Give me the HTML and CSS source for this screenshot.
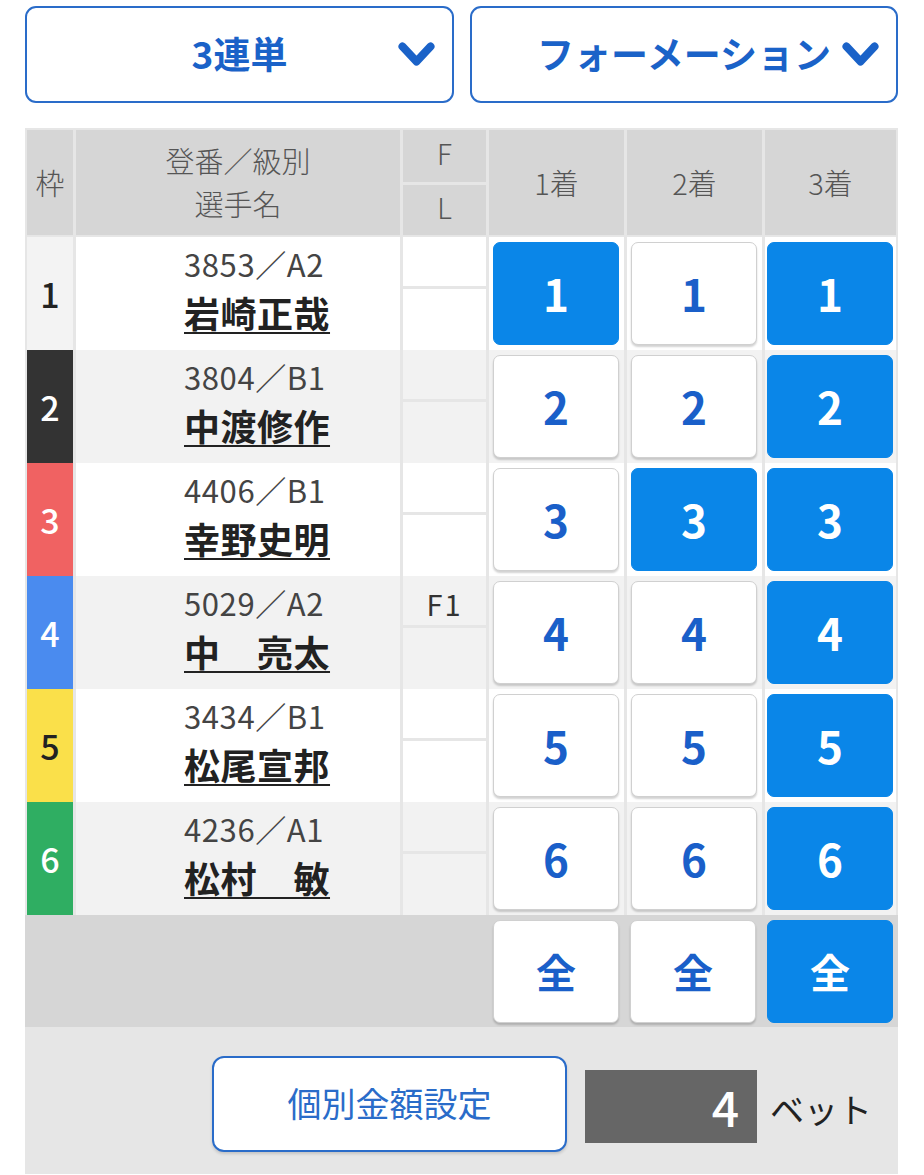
FILE: index.html
```html
<!DOCTYPE html>
<html lang="ja">
<head>
<meta charset="utf-8">
<title>3連単 フォーメーション</title>
<link rel="stylesheet" href="styles.css">
</head>
<body>
<div class="page">
  <div class="selects">
    <div class="select">
      <span class="sel-spacer"></span>
      <span class="sel-text">3連単</span>
      <svg class="chev" viewBox="0 0 37 25" width="37" height="25"><path d="M4.5 4.5 L18.5 19.5 L32.5 4.5" fill="none" stroke="#1a62c8" stroke-width="8" stroke-linecap="round" stroke-linejoin="round"/></svg>
    </div>
    <div class="select">
      <span class="sel-spacer"></span>
      <span class="sel-text">フォーメーション</span>
      <svg class="chev" viewBox="0 0 37 25" width="37" height="25"><path d="M4.5 4.5 L18.5 19.5 L32.5 4.5" fill="none" stroke="#1a62c8" stroke-width="8" stroke-linecap="round" stroke-linejoin="round"/></svg>
    </div>
  </div>

  <div class="board">
    <div class="row head">
      <div class="hc">枠</div>
      <div class="hc two"><span>登番／級別</span><span>選手名</span></div>
      <div class="fl">
        <div class="hc sub">F</div>
        <div class="hc sub">L</div>
      </div>
      <div class="hc">1着</div>
      <div class="hc">2着</div>
      <div class="hc">3着</div>
    </div>

    <div class="row odd">
      <div class="waku w1">1</div>
      <div class="player"><span class="reg">3853／A2</span><span class="pname">岩崎正哉</span></div>
      <div class="fl"><div class="flc"></div><div class="flc"></div></div>
      <div class="bc"><div class="btn on">1</div></div>
      <div class="bc"><div class="btn">1</div></div>
      <div class="bc"><div class="btn on">1</div></div>
    </div>
    <div class="row even">
      <div class="waku w2">2</div>
      <div class="player"><span class="reg">3804／B1</span><span class="pname">中渡修作</span></div>
      <div class="fl"><div class="flc"></div><div class="flc"></div></div>
      <div class="bc"><div class="btn">2</div></div>
      <div class="bc"><div class="btn">2</div></div>
      <div class="bc"><div class="btn on">2</div></div>
    </div>
    <div class="row odd">
      <div class="waku w3">3</div>
      <div class="player"><span class="reg">4406／B1</span><span class="pname">幸野史明</span></div>
      <div class="fl"><div class="flc"></div><div class="flc"></div></div>
      <div class="bc"><div class="btn">3</div></div>
      <div class="bc"><div class="btn on">3</div></div>
      <div class="bc"><div class="btn on">3</div></div>
    </div>
    <div class="row even">
      <div class="waku w4">4</div>
      <div class="player"><span class="reg">5029／A2</span><span class="pname">中　亮太</span></div>
      <div class="fl"><div class="flc">F1</div><div class="flc"></div></div>
      <div class="bc"><div class="btn">4</div></div>
      <div class="bc"><div class="btn">4</div></div>
      <div class="bc"><div class="btn on">4</div></div>
    </div>
    <div class="row odd">
      <div class="waku w5">5</div>
      <div class="player"><span class="reg">3434／B1</span><span class="pname">松尾宣邦</span></div>
      <div class="fl"><div class="flc"></div><div class="flc"></div></div>
      <div class="bc"><div class="btn">5</div></div>
      <div class="bc"><div class="btn">5</div></div>
      <div class="bc"><div class="btn on">5</div></div>
    </div>
    <div class="row even">
      <div class="waku w6">6</div>
      <div class="player"><span class="reg">4236／A1</span><span class="pname">松村　敏</span></div>
      <div class="fl"><div class="flc"></div><div class="flc"></div></div>
      <div class="bc"><div class="btn">6</div></div>
      <div class="bc"><div class="btn">6</div></div>
      <div class="bc"><div class="btn on">6</div></div>
    </div>

    <div class="allrow">
      <div class="all-spacer"></div>
      <div class="btn all">全</div>
      <div class="btn all">全</div>
      <div class="btn all on">全</div>
    </div>
  </div>

  <div class="footer">
    <div class="amount-btn">個別金額設定</div>
    <div class="count">4</div>
    <div class="bet">ベット</div>
  </div>
</div>
</body>
</html>
```
FILE: styles.css
```css
* { box-sizing: border-box; }
html, body { margin: 0; padding: 0; background: #fff; }
body {
  font-family: "Noto Sans CJK JP", "Noto Sans", sans-serif;
  color: #222;
}
.page {
  width: 873px;
  margin-left: 25px;
  padding-top: 6px;
}
.selects {
  display: flex;
  gap: 16px;
}
.select {
  width: 429px;
  height: 97px;
  border: 2px solid #2a6cc9;
  border-radius: 11px;
  background: #fff;
  display: grid;
  grid-template-columns: 1fr auto 1fr;
  align-items: center;
  padding-right: 17px;
  padding-left: 17px;
}
.select:last-child { width: 428px; }
.sel-text {
  color: #1a62c8;
  font-weight: 700;
  font-size: 37px;
  line-height: 1.2;
  padding-bottom: 2px;
}
.chev { justify-self: end; }

.board {
  margin-top: 25px;
  background: #e6e6e6;
  padding: 2px 2px 0;
}
.row {
  display: grid;
  grid-template-columns: 46px 324px 83px 135px 135px 131px;
  column-gap: 3px;
  height: 113px;
}
.row.head {
  height: 105px;
  margin-bottom: 2px;
}
.hc {
  background: #d6d6d6;
  color: #555;
  font-size: 29px;
  font-weight: 300;
  display: flex;
  align-items: center;
  justify-content: center;
  line-height: 1.2;
}
.hc.two {
  flex-direction: column;
  gap: 8px;
  padding-bottom: 2px;
}
.fl {
  display: grid;
  grid-template-rows: 49px 1fr;
  row-gap: 3px;
}
.head .fl { grid-template-rows: 52px 1fr; }
.hc.sub { font-size: 28px; padding-bottom: 4px; }

.odd > .player, .odd > .fl .flc, .odd > .bc { background: #fff; }
.even > .player, .even > .fl .flc, .even > .bc { background: #f2f2f2; }

.waku {
  display: flex;
  align-items: center;
  justify-content: center;
  font-size: 34px;
  font-weight: 500;
  color: #fff;
}
.w1 { background: #f3f3f3; color: #222; }
.w2 { background: #333333; }
.w3 { background: #f06262; }
.w4 { background: #4a8bef; }
.w5 { background: #fae04a; color: #222; }
.w6 { background: #2fae62; }

.player {
  display: flex;
  flex-direction: column;
  align-items: flex-start;
  padding-left: 108px;
  padding-top: 8px;
}
.reg {
  font-size: 31px;
  color: #444;
  line-height: 38px;
  letter-spacing: 0.6px;
}
.pname {
  margin-top: 8px;
  font-size: 36px;
  font-weight: 700;
  line-height: 42px;
  color: #222;
  letter-spacing: 0.5px;
  text-decoration: underline;
  text-decoration-thickness: 2px;
  text-underline-offset: 4px;
}
.flc {
  display: flex;
  align-items: center;
  justify-content: center;
  font-size: 29px;
  color: #333;
  letter-spacing: 2px;
  padding-top: 4px;
}
.bc {
  display: flex;
  align-items: center;
  justify-content: center;
  padding-right: 1px;
}
.btn {
  width: 126px;
  height: 103px;
  border-radius: 7px;
  background: #fff;
  border: 1px solid #d0d0d0;
  box-shadow: 0 2px 2px rgba(0,0,0,0.18);
  color: #1a5fc9;
  font-size: 44px;
  font-weight: 700;
  display: flex;
  align-items: center;
  justify-content: center;
  line-height: 1.2;
}
.btn.on {
  background: #0a86e8;
  border-color: #0a86e8;
  color: #fff;
  box-shadow: none;
}
.allrow {
  display: flex;
  align-items: center;
  margin: 0 -2px;
  padding: 0 5px 0 0;
  background: #d6d6d6;
  height: 112px;
  gap: 11px;
}
.all-spacer { width: 457px; flex-shrink: 0; }
.btn.all {
  flex-shrink: 0;
  font-size: 40px;
  font-weight: 700;
}

.footer {
  background: #e6e6e6;
  height: 147px;
  display: flex;
  align-items: flex-start;
  padding-left: 187px;
  padding-top: 29px;
}
.amount-btn {
  width: 355px;
  height: 96px;
  border: 2px solid #2a6cc9;
  border-radius: 12px;
  background: #fff;
  box-shadow: 0 2px 3px rgba(0,0,0,0.15);
  color: #2a6cc9;
  font-size: 34px;
  display: flex;
  align-items: center;
  justify-content: center;
  padding-bottom: 4px;
}
.count {
  margin-left: 18px;
  margin-top: 14px;
  width: 172px;
  height: 73px;
  background: #666;
  color: #fff;
  font-size: 48px;
  font-weight: 500;
  display: flex;
  align-items: center;
  justify-content: flex-end;
  padding-right: 18px;
  line-height: 1.2;
}
.bet {
  margin-left: 13px;
  margin-top: 26px;
  font-size: 34px;
  color: #222;
  line-height: 1.6;
}
```
